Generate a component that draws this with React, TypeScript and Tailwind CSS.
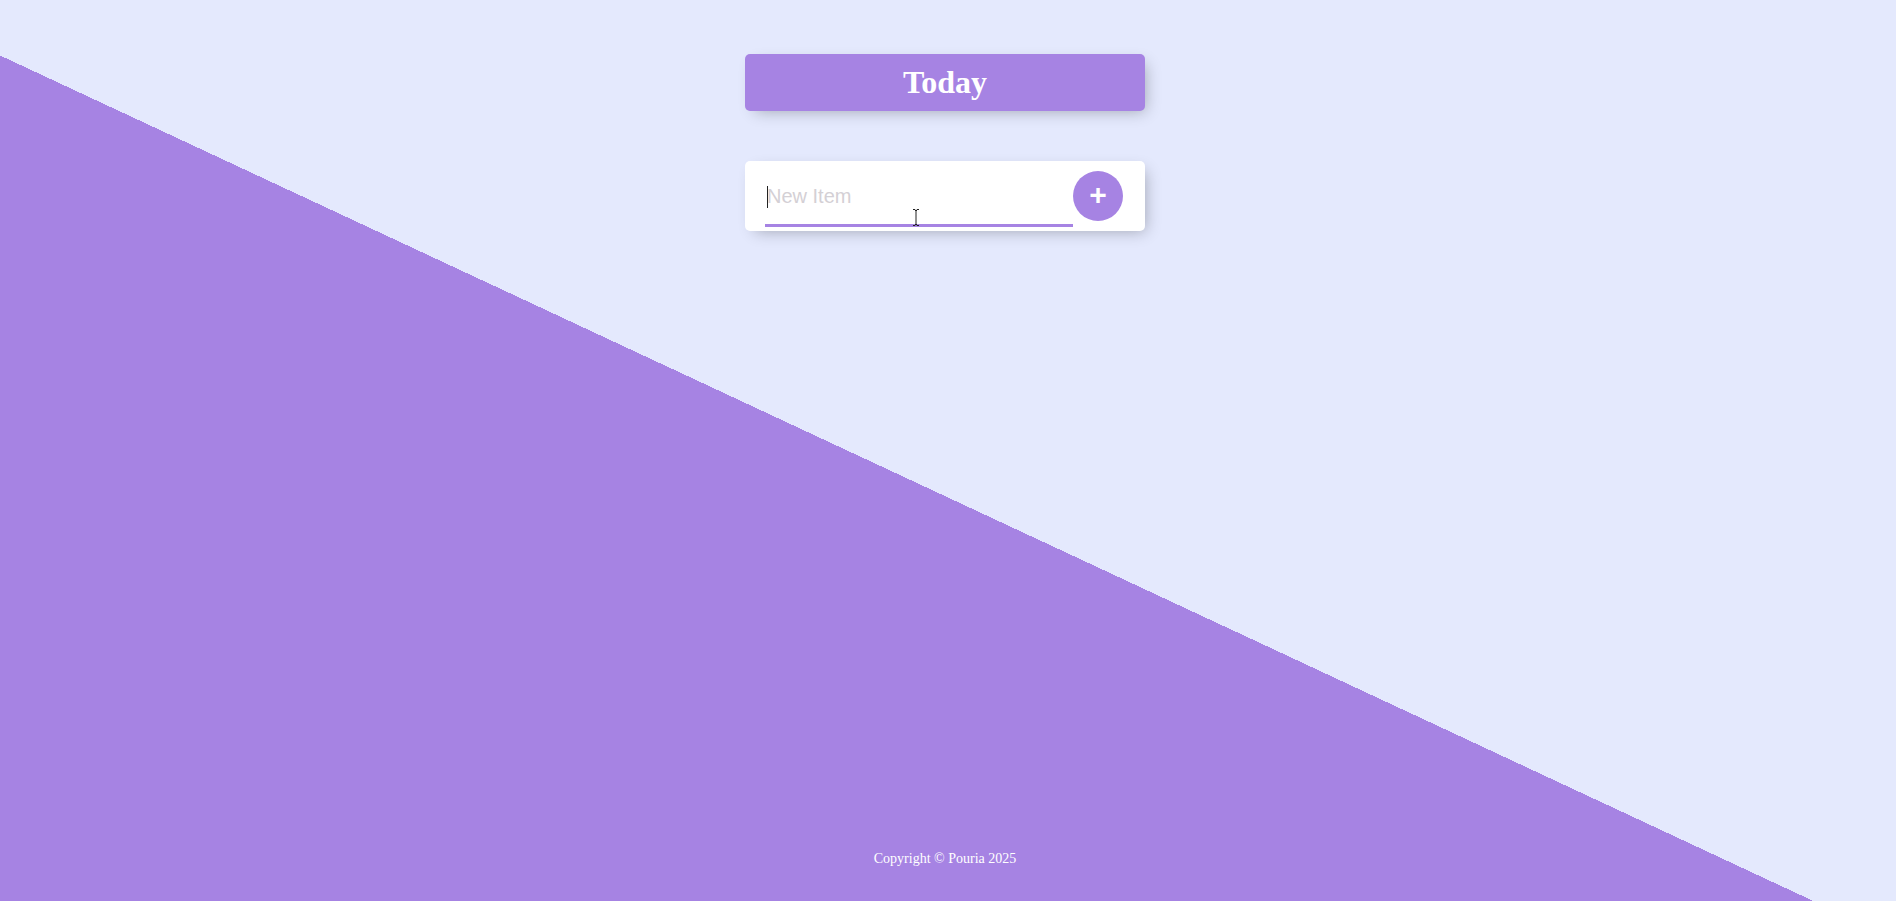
import React from "react";

export default function App() {
  return (
    <div className="min-h-screen flex flex-col bg-[#E4E9FD] bg-[linear-gradient(25deg,#A683E3_50%,#E4E9FD_50%)] bg-[length:100%_995px] bg-no-repeat pr-[6px] font-['Liberation_Sans',Arial,sans-serif]">
      <main className="pt-[54px] flex flex-col items-center">
        <div className="w-[400px] rounded-[5px] bg-[#A683E3] shadow-[5px_5px_15px_-5px_rgba(0,0,0,0.3)]">
          <h1 className="m-0 p-[10px] text-center text-[32px] font-bold leading-[normal] text-white font-['Liberation_Serif',serif]">
            Today
          </h1>
        </div>
        <div className="mt-[50px] w-[400px] h-[70px] rounded-[5px] bg-white shadow-[5px_5px_15px_-5px_rgba(0,0,0,0.3)] flex items-center pl-[20px]">
          <div className="relative w-[308px] h-[60px] mt-[1px] shadow-[inset_0_-3px_0_0_#A683E3]">
            <input
              type="text"
              placeholder="New Item"
              className="w-full h-full bg-transparent border-0 outline-none px-[2px] text-[20px] text-[#00204a] placeholder:text-[#d4d0d5] font-['Liberation_Sans',Arial,sans-serif]"
            />
            <span className="pointer-events-none absolute left-[2px] top-[19px] w-[1px] h-[22px] bg-[#222]" />
            <svg
              className="pointer-events-none absolute left-[147px] top-[42px]"
              width="8"
              height="17"
              viewBox="0 0 8 17"
            >
              <path d="M1 0.5h2.2M4.8 0.5H7M4 1v15M1 16.5h2.2M4.8 16.5H7M3 1.2l1 0.6 1-0.6M3 15.8l1-0.6 1 0.6" stroke="#222" strokeWidth="1" fill="none" />
            </svg>
          </div>
          <button className="w-[50px] h-[50px] rounded-full bg-[#A683E3] text-white text-[30px] font-bold leading-none pb-[3px] flex items-center justify-center border-0 font-['Liberation_Sans',Arial,sans-serif]">
            +
          </button>
        </div>
      </main>
      <footer className="mt-auto pb-[34px] text-center text-[14px] leading-[16px] text-white font-['Liberation_Serif',serif]">
        Copyright © Pouria 2025
      </footer>
    </div>
  );
}
